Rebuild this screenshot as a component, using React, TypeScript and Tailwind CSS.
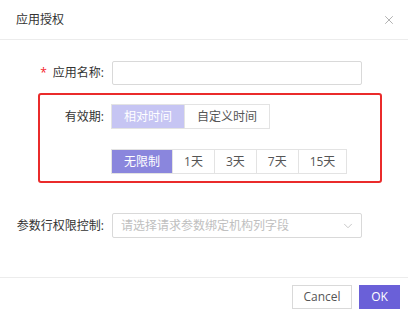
import { ChevronDown, X } from "lucide-react";

const relative = ["相对时间", "自定义时间"];
const ranges = ["无限制", "1天", "3天", "7天", "15天"];

export default function App() {
  return (
    <div
      className="w-[408px] h-[316px] bg-white text-[12px] text-[#333] overflow-hidden"
      style={{ fontFamily: '"Open Sans", "Noto Sans CJK SC", sans-serif' }}
    >
      {/* Header */}
      <div className="h-[40px] flex items-center justify-between pl-4 pr-[12px] border-b border-[#ececec]">
        <span className="text-[12px] text-[#333]">应用授权</span>
        <X className="w-[14px] h-[14px] text-[#999]" strokeWidth={1.3} />
      </div>

      {/* Body */}
      <div className="pt-[21px] h-[238px] border-b border-[#ececec]">
        <div className="flex items-center h-[24px]">
          <label className="w-[106px] text-right pr-[2px]">
            <span className="text-[#f5222d] mr-[6px]">*</span>应用名称:
          </label>
          <div className="ml-[6px] w-[250px] h-[24px] border border-[#d9d9d9] rounded-[2px]" />
        </div>

        {/* Highlighted block */}
        <div className="mt-[8px] ml-[38px] w-[344px] border-2 border-[#ea2b2b] rounded-[3px] pt-[9px] pb-[7px]">
          <div className="flex items-center h-[25px]">
            <label className="w-[66px] text-right pr-[2px]">有效期:</label>
            <div className="ml-[5px] flex h-[25px] border border-[#e3e3e3]">
              {relative.map((t, i) => (
                <div
                  key={t}
                  className={
                    i === 0
                      ? "px-[12px] flex items-center bg-[#c6c5f3] text-white"
                      : "px-[12px] flex items-center border-l border-[#e3e3e3] text-[#555]"
                  }
                >
                  {t}
                </div>
              ))}
            </div>
          </div>
          <div className="flex h-[25px] mt-[20px] ml-[71px]">
            <div className="flex border border-[#e3e3e3]">
              {ranges.map((t, i) => (
                <div
                  key={t}
                  className={
                    i === 0
                      ? "px-[12px] flex items-center bg-[#8a86dd] text-white"
                      : "px-[11px] flex items-center border-l border-[#e3e3e3] text-[#555]"
                  }
                >
                  {t}
                </div>
              ))}
            </div>
          </div>
        </div>

        <div className="flex items-center h-[25px] mt-[30px]">
          <label className="w-[106px] text-right pr-[2px]">参数行权限控制:</label>
          <div className="ml-[6px] w-[250px] h-[25px] border border-[#d9d9d9] rounded-[2px] flex items-center justify-between pl-[8px] pr-[6px]">
            <span className="text-[#c0c0c0]">请选择请求参数绑定机构列字段</span>
            <ChevronDown className="w-[14px] h-[14px] text-[#c0c0c0]" strokeWidth={1.5} />
          </div>
        </div>
      </div>

      {/* Footer */}
      <div className="flex justify-end gap-[7px] pt-[7px] pr-[8px]">
        <button className="w-[60px] h-[24px] border border-[#d9d9d9] text-[#555] bg-white text-[12px]">
          Cancel
        </button>
        <button className="w-[41px] h-[24px] bg-[#6a60d8] text-white text-[12px]">OK</button>
      </div>
    </div>
  );
}
